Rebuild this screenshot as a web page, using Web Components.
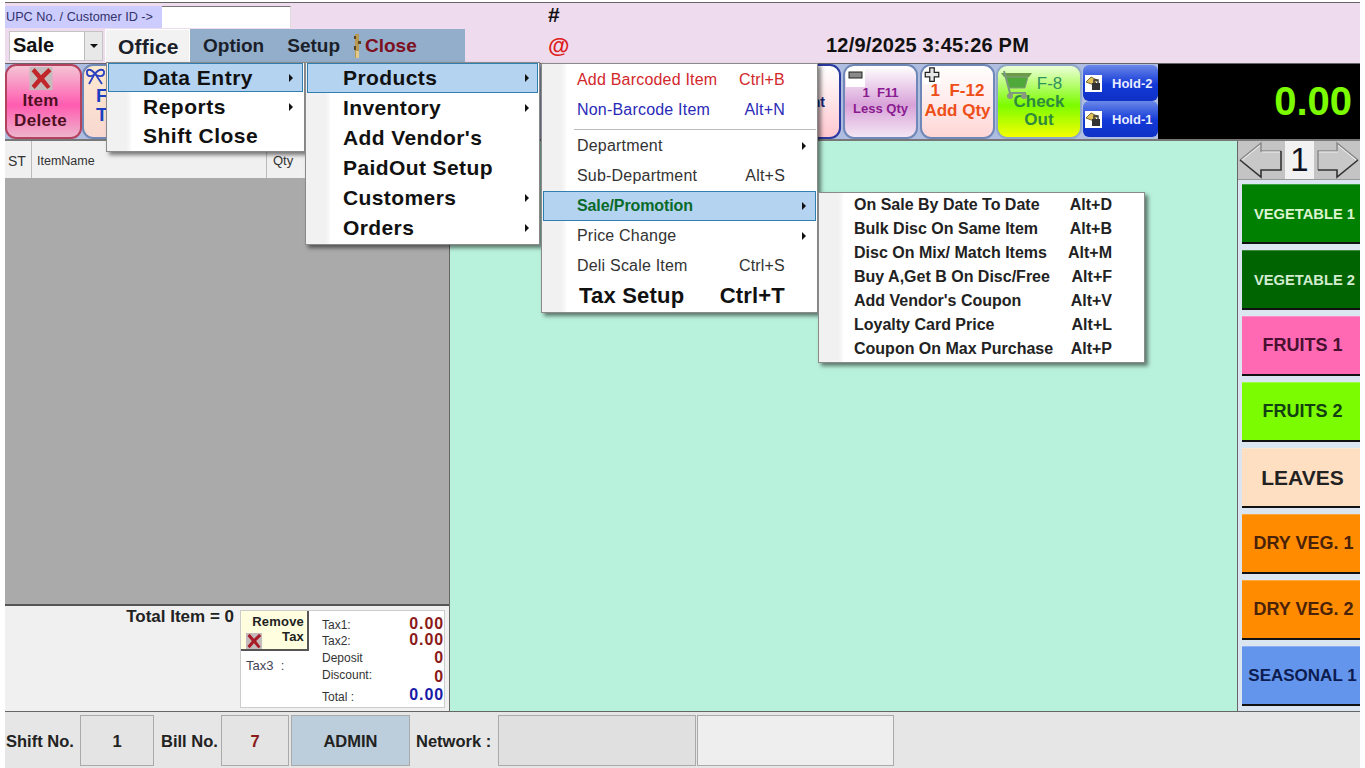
<!DOCTYPE html>
<html>
<head>
<meta charset="utf-8">
<title>POS</title>
<style>
html,body{margin:0;padding:0;background:#fff;}
body{width:1365px;height:768px;overflow:hidden;font-family:"Liberation Sans",Arial,sans-serif;}
</style>
</head>
<body>
<pos-app></pos-app>

<script>
// ---------- menu item
class PosItem extends HTMLElement {
    constructor() {
        super();
        this.attachShadow({ mode: 'open' });
        const sc = this.getAttribute('shortcut') || '';
        const seta = this.hasAttribute('arrow') ? '<i class="seta"></i>' : '';
        this.shadowRoot.innerHTML = `
        <style>
            :host{display:flex;align-items:center;box-sizing:border-box;height:var(--h,30px);margin:0 1px;border:1px solid transparent;position:relative;white-space:nowrap;color:var(--cor,#111);font:var(--fonte,700 21px "Liberation Sans",Arial,sans-serif);letter-spacing:var(--ls,.5px);}
            :host([active]){background:#b3d3f1;border-color:#2f7fb0;}
            .txt{padding-left:var(--tx,34px);flex:1;}
            .sc{position:absolute;right:var(--sr,30px);top:0;bottom:0;display:flex;align-items:center;}
            .seta{position:absolute;right:var(--ar,9px);top:50%;margin-top:-4px;border-left:4px solid #111;border-top:4px solid transparent;border-bottom:4px solid transparent;}
        </style>
        <span class="txt"><slot></slot></span><span class="sc">${sc}</span>${seta}`;
    }
}
customElements.define('pos-item', PosItem);

// ---------- popup menu, floats above the screen
class PosMenu extends HTMLElement {
    constructor() {
        super();
        this.attachShadow({ mode: 'open' });
        this.shadowRoot.innerHTML = `
        <style>
            :host{display:block;position:absolute;box-sizing:border-box;background:#fff;border:1px solid #8a8a8a;box-shadow:3px 3px 4px rgba(0,0,0,.5);z-index:10;}
            .gutter{position:absolute;left:0;top:0;bottom:0;width:24px;background:linear-gradient(90deg,#f1f1f1 0,#f1f1f1 80%,#fafafa);}
            .lista{position:relative;}
        </style>
        <div class="gutter"></div><div class="lista"><slot></slot></div>`;
    }
}
customElements.define('pos-menu', PosMenu);

// ---------- header
const tplHeader = document.createElement('template');
tplHeader.innerHTML = `
<style>
    :host{display:block;height:61px;margin-top:2px;background:#eedcee;border-top:1px solid #666;box-sizing:border-box;position:relative;}
    .row{display:flex;align-items:center;}
    .r1{height:25px;padding-top:2px;box-sizing:border-box;}
    .upc{width:157px;height:22px;background:#ccccff;font-size:12.700px;color:#33336b;display:flex;align-items:center;padding-left:1px;box-sizing:border-box;white-space:nowrap;}
    .inp{width:129px;height:22px;background:#fff;border-top:1px solid #777;border-right:1px solid #ddd;box-sizing:border-box;}
    .hash{margin-left:257px;font-size:21px;font-weight:700;color:#111;margin-top:-3px;}
    .r2{height:33px;margin-top:1px;}
    .combo{margin-left:4px;width:94px;height:30px;background:#fff;border:1px solid #c4c4c4;box-sizing:border-box;display:flex;font-size:20px;font-weight:700;color:#111;align-items:center;padding-left:3px;position:relative;}
    .btn{position:absolute;right:0;top:0;bottom:0;width:18px;background:#e8e8e8;border-left:1px solid #bbb;box-sizing:border-box;display:flex;align-items:center;justify-content:center;}
    .btn i{border-top:4px solid #111;border-left:4px solid transparent;border-right:4px solid transparent;}
    .bar{margin-left:2px;width:360px;height:33px;background:#93aecb;display:flex;align-items:center;font-size:19px;font-weight:700;color:#1a1f2a;box-sizing:border-box;}
    .bar span{display:block;}
    .office{background:#f2f2f2;width:85px;padding-left:12px;height:33px;line-height:33px;box-sizing:border-box;border:1px solid #fff;border-bottom:0;font-size:21px;letter-spacing:.2px;}
    .opt{margin-left:13px;}
    .setup{margin-left:23px;}
    .key{margin-left:13px;width:8px;height:26px;flex:none;}
    .close{color:#7d1020;margin-left:4px;}
    .at{margin-left:83px;font-size:22px;font-weight:700;color:#dd1c1c;width:40px;}
    .data{margin-left:238px;font-size:20px;font-weight:700;color:#111;letter-spacing:.2px;white-space:nowrap;}
</style>
<div class="row r1"><div class="upc">UPC No. / Customer ID -&gt;</div><div class="inp"></div><div class="hash">#</div></div>
<div class="row r2">
    <div class="combo">Sale<div class="btn"><i></i></div></div>
    <div class="bar">
        <span class="office">Office</span><span class="opt">Option</span><span class="setup">Setup</span>
        <svg class="key" viewBox="0 0 8 26"><rect x="2" y="1" width="4" height="24" fill="#b89a52"/><rect x="1" y="3" width="2" height="3" fill="#5a4420"/><rect x="5" y="8" width="3" height="3" fill="#5a4420"/><rect x="1" y="13" width="2" height="4" fill="#5a4420"/><rect x="3" y="18" width="3" height="7" fill="#e2c98a"/></svg>
        <span class="close">Close</span>
    </div>
    <div class="at">@</div>
    <div class="data">12/9/2025 3:45:26 PM</div>
</div>`;
class PosHeader extends HTMLElement {
    constructor() {
        super();
        this.attachShadow({ mode: 'open' });
        this.shadowRoot.appendChild(tplHeader.content.cloneNode(true));
    }
}
customElements.define('pos-header', PosHeader);

// ---------- toolbar button
class ToolBtn extends HTMLElement {
    constructor() {
        super();
        this.attachShadow({ mode: 'open' });
        this.shadowRoot.innerHTML = `
        <style>
            :host{display:flex;flex-direction:column;align-items:center;justify-content:var(--j,center);box-sizing:border-box;height:75px;border-radius:11px;border:2px solid var(--bd,#7088b8);background:var(--bg,#eee);color:var(--cor,#111);text-align:center;font-weight:700;position:relative;overflow:hidden;}
            ::slotted(svg){position:absolute;}
        </style>
        <slot></slot>`;
    }
}
customElements.define('tool-btn', ToolBtn);

// ---------- toolbar
const tplToolbar = document.createElement('template');
tplToolbar.innerHTML = `
<style>
    :host{display:flex;height:78px;background:#aebde0;border-top:1px solid #666;border-bottom:2px solid #777;box-sizing:border-box;align-items:center;}
    .del{width:77px;--bg:linear-gradient(#f4c4d4,#ff5cb0 55%,#eeb4cc);--bd:#b3425f;--cor:#4d1020;font-size:17px;letter-spacing:.3px;line-height:20px;padding:19px 6px 0 0;}
    .ft{width:77px;--bg:linear-gradient(#fde9d0,#f8d8d0);font-size:19px;line-height:19px;--cor:#1b3fc0;align-items:flex-start;padding:7px 0 0 12px;}
    .fill{flex:1;}
    .nt{width:82px;--bg:linear-gradient(#fff,#ffc8d0);--bd:#2a3aa0;--cor:#14247a;font-size:14px;align-items:flex-end;padding-right:14px;}
    .less{width:75px;margin-left:2px;--bg:linear-gradient(#fff 0,#d8a2d8 55%,#f3e6f3);--cor:#8a1a90;font-size:13px;line-height:16px;padding-bottom:2px;}
    .add{width:75px;margin-left:2px;--bg:linear-gradient(#fff 0,#ffd6d6 100%);--cor:#ee4e18;font-size:17px;line-height:20px;padding-bottom:2px;}
    .chk{width:86px;margin-left:1px;--bg:linear-gradient(#ecffd8,#7cfc00 55%,#f4ff00);--bd:#90a8c8;--cor:#2f8a3f;font-size:17px;line-height:18px;}
    .holds{width:75px;margin:-1px 0 0 1px;display:flex;flex-direction:column;}
    .hold{height:36px;background:linear-gradient(#6a88e8,#1238d8 55%,#0f30c4);border-radius:6px;color:#e8ecff;font-size:13px;font-weight:700;display:flex;align-items:center;padding-left:29px;position:relative;box-sizing:border-box;}
    .hold svg{position:absolute;left:2px;top:10px;}
    .total{width:202px;height:75px;background:#000;color:#7cfc00;font-size:40px;font-weight:700;display:flex;align-items:center;justify-content:flex-end;padding-right:8px;box-sizing:border-box;}
</style>
<tool-btn class="del"><svg style="left:22px;top:1px" width="24" height="23" viewBox="0 0 22 22"><rect width="22" height="22" fill="#c4bcbc"/><path d="M2 4 L5 1 L11 8 L18 1 L21 4 L14 11 L20 19 L17 21 L11 14 L5 21 L2 18 L8 11Z" fill="#c0262a"/></svg>Item<br>Delete</tool-btn>
<tool-btn class="ft"><svg style="left:1px;top:2px" width="21" height="18" viewBox="0 0 21 18"><g fill="none" stroke="#2a3fc0" stroke-width="1.8"><path d="M10 6 C6 0 1 1 2 5 C2 9 7 9 10 6 C13 9 19 9 19 5 C20 1 14 0 10 6Z"/><path d="M9 7 L4 16 M11 7 L17 16"/></g></svg>F<br>T</tool-btn>
<div class="fill"></div>
<tool-btn class="nt">nt</tool-btn>
<tool-btn class="less"><svg style="left:1px;top:1px" width="19" height="20" viewBox="0 0 19 20"><rect width="19" height="20" fill="#fff"/><rect x="3" y="5" width="13" height="6" fill="#8a8a8a" stroke="#222"/></svg>1&nbsp; F11<br>Less Qty</tool-btn>
<tool-btn class="add"><svg style="left:1px;top:0" width="18" height="18" viewBox="0 0 19 20"><rect width="19" height="20" fill="#fff"/><path d="M7 2h5v5h5v5h-5v5H7v-5H2V7h5z" fill="#e8e8e8" stroke="#222" stroke-width="1.400"/></svg>1&nbsp; F-12<br>Add Qty</tool-btn>
<tool-btn class="chk"><svg style="left:2px;top:1px" width="34" height="34" viewBox="0 0 34 34"><path d="M1 6h31l-3 4H4z" fill="#6a9a4a"/><path d="M6 10h22l-3 11H9z" fill="#4fa83a" stroke="#8a9a80"/><path d="M4 4l6 22h16" fill="none" stroke="#7a9a80" stroke-width="2"/><circle cx="10" cy="29" r="3" fill="#8a9a80"/><circle cx="24" cy="29" r="3" fill="#8a9a80"/></svg><span style="padding-left:21px;font-weight:400;color:#2f9060">F-8</span>Check<br>Out</tool-btn>
<div class="holds">
    <div class="hold"><svg width="17" height="17" viewBox="0 0 17 17"><rect width="17" height="17" fill="#fff"/><path d="M1 7l5-5 6 3-3 5z" fill="#e2c25a" stroke="#7a6a30"/><rect x="7" y="8" width="8" height="7" fill="#333"/><path d="M9 8V5h4v3" fill="none" stroke="#333" stroke-width="1.400"/></svg>Hold-2</div>
    <div class="hold"><svg width="17" height="17" viewBox="0 0 17 17"><rect width="17" height="17" fill="#fff"/><path d="M1 7l5-5 6 3-3 5z" fill="#e2c25a" stroke="#7a6a30"/><rect x="7" y="8" width="8" height="7" fill="#333"/><path d="M9 8V5h4v3" fill="none" stroke="#333" stroke-width="1.400"/></svg>Hold-1</div>
</div>
<div class="total">0.00</div>`;
class PosToolbar extends HTMLElement {
    constructor() {
        super();
        this.attachShadow({ mode: 'open' });
        this.shadowRoot.appendChild(tplToolbar.content.cloneNode(true));
    }
}
customElements.define('pos-toolbar', PosToolbar);

// ---------- left panel with the bill
const tplBill = document.createElement('template');
tplBill.innerHTML = `
<style>
    :host{display:flex;flex-direction:column;width:444px;background:#f0f0f0;border-right:1px solid #666;box-sizing:content-box;}
    .cab{height:37px;display:flex;font-size:12.500px;color:#333;background:#f0f0f0;flex:none;}
    .cab div{display:flex;align-items:center;padding:2px 0 0 3px;box-sizing:border-box;height:37px;}
    .st{width:27px;border-right:1px solid #bbb;font-size:14px;}
    .nome{width:235px;border-right:1px solid #bbb;padding-left:5px !important;}
    .qt{padding-left:6px !important;font-size:13px;}
    .lista{flex:1;background:#aaa;border-bottom:2px solid #555;}
    .pe{height:105px;display:flex;font-size:12px;flex:none;}
    .qtd{width:229px;text-align:right;font-size:17px;font-weight:700;color:#222;padding-top:2px;box-sizing:border-box;line-height:18px;}
    .tot{margin:4px 0 0 6px;width:205px;height:98px;background:#fff;border:1px solid #ccc;box-sizing:border-box;display:flex;}
    .esq{width:68px;}
    .rem{height:40px;background:#ffffe0;border-right:2px solid #555;border-bottom:2px solid #555;box-sizing:border-box;font-size:13px;font-weight:700;text-align:right;padding:3px 3px 0 0;line-height:15px;letter-spacing:.2px;position:relative;color:#222;}
    .rem svg{position:absolute;left:5px;top:22px;}
    .t3{font-size:13px;color:#445;padding:7px 0 0 5px;}
    .dir{flex:1;display:grid;grid-template-columns:1fr auto;grid-template-rows:19px 16px 18px 16px 23px;padding:3px 0 0 13px;color:#333;align-items:center;}
    .dir b{font-size:16px;letter-spacing:.9px;text-align:right;color:#8b1a1a;line-height:14px;}
    .dir b.azul{color:#1a1aa8;}
</style>
<div class="cab"><div class="st">ST</div><div class="nome">ItemName</div><div class="qt">Qty</div></div>
<div class="lista"></div>
<div class="pe">
    <div class="qtd">Total Item = 0</div>
    <div class="tot">
        <div class="esq">
            <div class="rem">Remove<br>Tax<svg width="16" height="16" viewBox="0 0 22 22"><rect width="22" height="22" fill="#c4bcbc"/><path d="M2 4 L5 1 L11 8 L18 1 L21 4 L14 11 L20 19 L17 21 L11 14 L5 21 L2 18 L8 11Z" fill="#a81c2a"/></svg></div>
            <div class="t3">Tax3&nbsp; :</div>
        </div>
        <div class="dir">
            <span style="margin-top:2px">Tax1:</span><b>0.00</b>
            <span>Tax2:</span><b style="margin-top:-3px">0.00</b>
            <span>Deposit</span><b>0</b>
            <span style="margin-top:-1px">Discount:</span><b style="margin-top:4px">0</b>
            <span style="margin-top:5px">Total :</span><b class="azul">0.00</b>
        </div>
    </div>
</div>`;
class PosBill extends HTMLElement {
    constructor() {
        super();
        this.attachShadow({ mode: 'open' });
        this.shadowRoot.appendChild(tplBill.content.cloneNode(true));
    }
}
customElements.define('pos-bill', PosBill);

// ---------- category button on the rail
class RailBtn extends HTMLElement {
    constructor() {
        super();
        this.attachShadow({ mode: 'open' });
        this.shadowRoot.innerHTML = `
        <style>
            :host{display:flex;align-items:center;justify-content:center;box-sizing:border-box;height:60px;margin:0 0 6px 4px;padding-left:var(--pl,3px);flex:none;background:var(--bg);color:var(--cor,#222);border-bottom:2px solid #111;border-top:1px solid rgba(255,255,255,.25);font-size:var(--fs,18px);font-weight:700;white-space:nowrap;}
        </style>
        <slot></slot>`;
    }
}
customElements.define('rail-btn', RailBtn);

// ---------- rail on the right
const tplRail = document.createElement('template');
tplRail.innerHTML = `
<style>
    :host{display:flex;flex-direction:column;width:123px;background:#dce6f0;border-left:1px solid #666;box-sizing:border-box;overflow:hidden;}
    .nav{height:39px;display:flex;background:#c4c4c4;margin-bottom:4px;border-bottom:1px solid #999;box-sizing:border-box;flex:none;}
    .nav svg{flex:none;}
    .num{width:29px;background:#f2f2f2;font-size:33px;color:#112;display:flex;align-items:center;justify-content:center;margin:0 2px;}
</style>
<div class="nav">
    <svg width="45" height="38" viewBox="0 0 45 38"><path d="M2 19 L23 2 V10 H43 V29 H23 V36Z" fill="#c8c8c8"/><path d="M2 19 L23 2 V10 H43" fill="none" stroke="#8a8a8a" stroke-width="1.500"/><path d="M4 19 L22 4.500 M24 11 H42" fill="none" stroke="#f0f0f0"/><path d="M43 10 V29 H23 V36 L2 19" fill="none" stroke="#333" stroke-width="1.600"/></svg>
    <div class="num">1</div>
    <svg width="44" height="38" viewBox="0 0 44 38"><path d="M42 19 L21 2 V10 H2 V29 H21 V36Z" fill="#c8c8c8"/><path d="M2 29 V10 H21 V2 L42 19" fill="none" stroke="#8a8a8a" stroke-width="1.500"/><path d="M3 11 H22 M22 4.500 L40 19" fill="none" stroke="#f0f0f0"/><path d="M42 19 L21 36 V29 H2" fill="none" stroke="#333" stroke-width="1.600"/></svg>
</div>
<rail-btn style="--bg:#008000;--cor:#dcf5d0;--fs:14.700px;--pl:7px">VEGETABLE 1</rail-btn>
<rail-btn style="--bg:#006400;--cor:#d4ecd0;--fs:14.700px;--pl:7px">VEGETABLE 2</rail-btn>
<rail-btn style="--bg:#ff69b4;--cor:#4a1030">FRUITS 1</rail-btn>
<rail-btn style="--bg:#7cfc00;--cor:#124012">FRUITS 2</rail-btn>
<rail-btn style="--bg:#ffdfc2;--cor:#222;--fs:21px">LEAVES</rail-btn>
<rail-btn style="--bg:#ff8c00;--cor:#4a2208;--pl:5px">DRY VEG. 1</rail-btn>
<rail-btn style="--bg:#ff8c00;--cor:#4a2208;--pl:5px">DRY VEG. 2</rail-btn>
<rail-btn style="--bg:#6495ed;--cor:#0c1c50;--fs:17px">SEASONAL 1</rail-btn>`;
class PosRail extends HTMLElement {
    constructor() {
        super();
        this.attachShadow({ mode: 'open' });
        this.shadowRoot.appendChild(tplRail.content.cloneNode(true));
    }
}
customElements.define('pos-rail', PosRail);

// ---------- status bar
const tplStatus = document.createElement('template');
tplStatus.innerHTML = `
<style>
    :host{display:flex;flex:1;align-items:center;background:#e6e6e6;border-top:1px solid #666;box-sizing:border-box;font-size:16.500px;font-weight:700;color:#222;}
    .l{white-space:nowrap;padding-top:3px;}
    .b{height:51px;border:1px solid #aaa;box-sizing:border-box;display:flex;align-items:center;justify-content:center;padding-top:3px;}
</style>
<span class="l" style="margin-left:1px;width:74px">Shift No.</span>
<div class="b" style="width:74px;background:#e4e4e4">1</div>
<span class="l" style="margin-left:7px;width:60px">Bill No.</span>
<div class="b" style="width:68px;background:#e4e4e4;color:#8b1a1a">7</div>
<div class="b" style="width:119px;margin-left:2px;background:#bccddb">ADMIN</div>
<span class="l" style="margin-left:6px;width:82px">Network :</span>
<div class="b" style="width:198px;background:#e0e0e0"></div>
<div class="b" style="width:197px;margin-left:1px;background:#eee"></div>`;
class PosStatus extends HTMLElement {
    constructor() {
        super();
        this.attachShadow({ mode: 'open' });
        this.shadowRoot.appendChild(tplStatus.content.cloneNode(true));
    }
}
customElements.define('pos-status', PosStatus);

// ---------- whole screen
const tplApp = document.createElement('template');
tplApp.innerHTML = `
<style>
    :host{display:flex;flex-direction:column;width:1360px;height:768px;padding-left:5px;box-sizing:border-box;position:relative;font-family:"Liberation Sans",Arial,sans-serif;}
    pos-header,pos-toolbar{flex:none;}
    .corpo{display:flex;height:570px;flex:none;}
    .meio{flex:1;background:#b9f2dc;}
    .m1{left:106px;top:62px;width:199px;height:90px;--h:29px;}
    .m2{left:305px;top:62px;width:235px;height:183px;--ar:8px;--tx:35px;--ls:.4px;}
    .m3{left:541px;top:63px;width:277px;height:250px;padding-top:1px;--fonte:400 16px "Liberation Sans",Arial,sans-serif;--tx:33px;--cor:#333;--ls:.2px;}
    .m4{left:818px;top:192px;width:327px;height:171px;--fonte:700 16px "Liberation Sans",Arial,sans-serif;--h:24px;--tx:33px;--cor:#222;--ls:0;}
    .sep{height:1px;background:#bbb;margin:0 1px 0 32px;}
</style>
<pos-header></pos-header>
<pos-toolbar></pos-toolbar>
<div class="corpo"><pos-bill></pos-bill><div class="meio"></div><pos-rail></pos-rail></div>
<pos-status></pos-status>

<pos-menu class="m1">
    <pos-item active arrow>Data Entry</pos-item>
    <pos-item arrow>Reports</pos-item>
    <pos-item>Shift Close</pos-item>
</pos-menu>
<pos-menu class="m2">
    <pos-item active arrow>Products</pos-item>
    <pos-item arrow>Inventory</pos-item>
    <pos-item>Add Vendor's</pos-item>
    <pos-item>PaidOut Setup</pos-item>
    <pos-item arrow>Customers</pos-item>
    <pos-item arrow>Orders</pos-item>
</pos-menu>
<pos-menu class="m3">
    <pos-item shortcut="Ctrl+B" style="--cor:#d2282c">Add Barcoded Item</pos-item>
    <pos-item shortcut="Alt+N" style="--cor:#2a2ab8">Non-Barcode Item</pos-item>
    <div class="sep" style="margin-top:4px;margin-bottom:1px"></div>
    <pos-item arrow>Department</pos-item>
    <pos-item shortcut="Alt+S">Sub-Department</pos-item>
    <pos-item active arrow style="--cor:#0a6a2a;--ls:-.1px;--fonte:700 16px 'Liberation Sans',Arial,sans-serif">Sale/Promotion</pos-item>
    <pos-item arrow>Price Change</pos-item>
    <pos-item shortcut="Ctrl+S">Deli Scale Item</pos-item>
    <pos-item shortcut="Ctrl+T" style="--cor:#111;--tx:35px;--fonte:700 22px 'Liberation Sans',Arial,sans-serif">Tax Setup</pos-item>
</pos-menu>
<pos-menu class="m4">
    <pos-item shortcut="Alt+D">On Sale By Date To Date</pos-item>
    <pos-item shortcut="Alt+B">Bulk Disc On Same Item</pos-item>
    <pos-item shortcut="Alt+M">Disc On Mix/ Match Items</pos-item>
    <pos-item shortcut="Alt+F">Buy A,Get B On Disc/Free</pos-item>
    <pos-item shortcut="Alt+V">Add Vendor's Coupon</pos-item>
    <pos-item shortcut="Alt+L">Loyalty Card Price</pos-item>
    <pos-item shortcut="Alt+P">Coupon On Max Purchase</pos-item>
</pos-menu>`;
class PosApp extends HTMLElement {
    constructor() {
        super();
        this.attachShadow({ mode: 'open' });
        this.shadowRoot.appendChild(tplApp.content.cloneNode(true));
    }
}
customElements.define('pos-app', PosApp);
</script>
</body>
</html>
